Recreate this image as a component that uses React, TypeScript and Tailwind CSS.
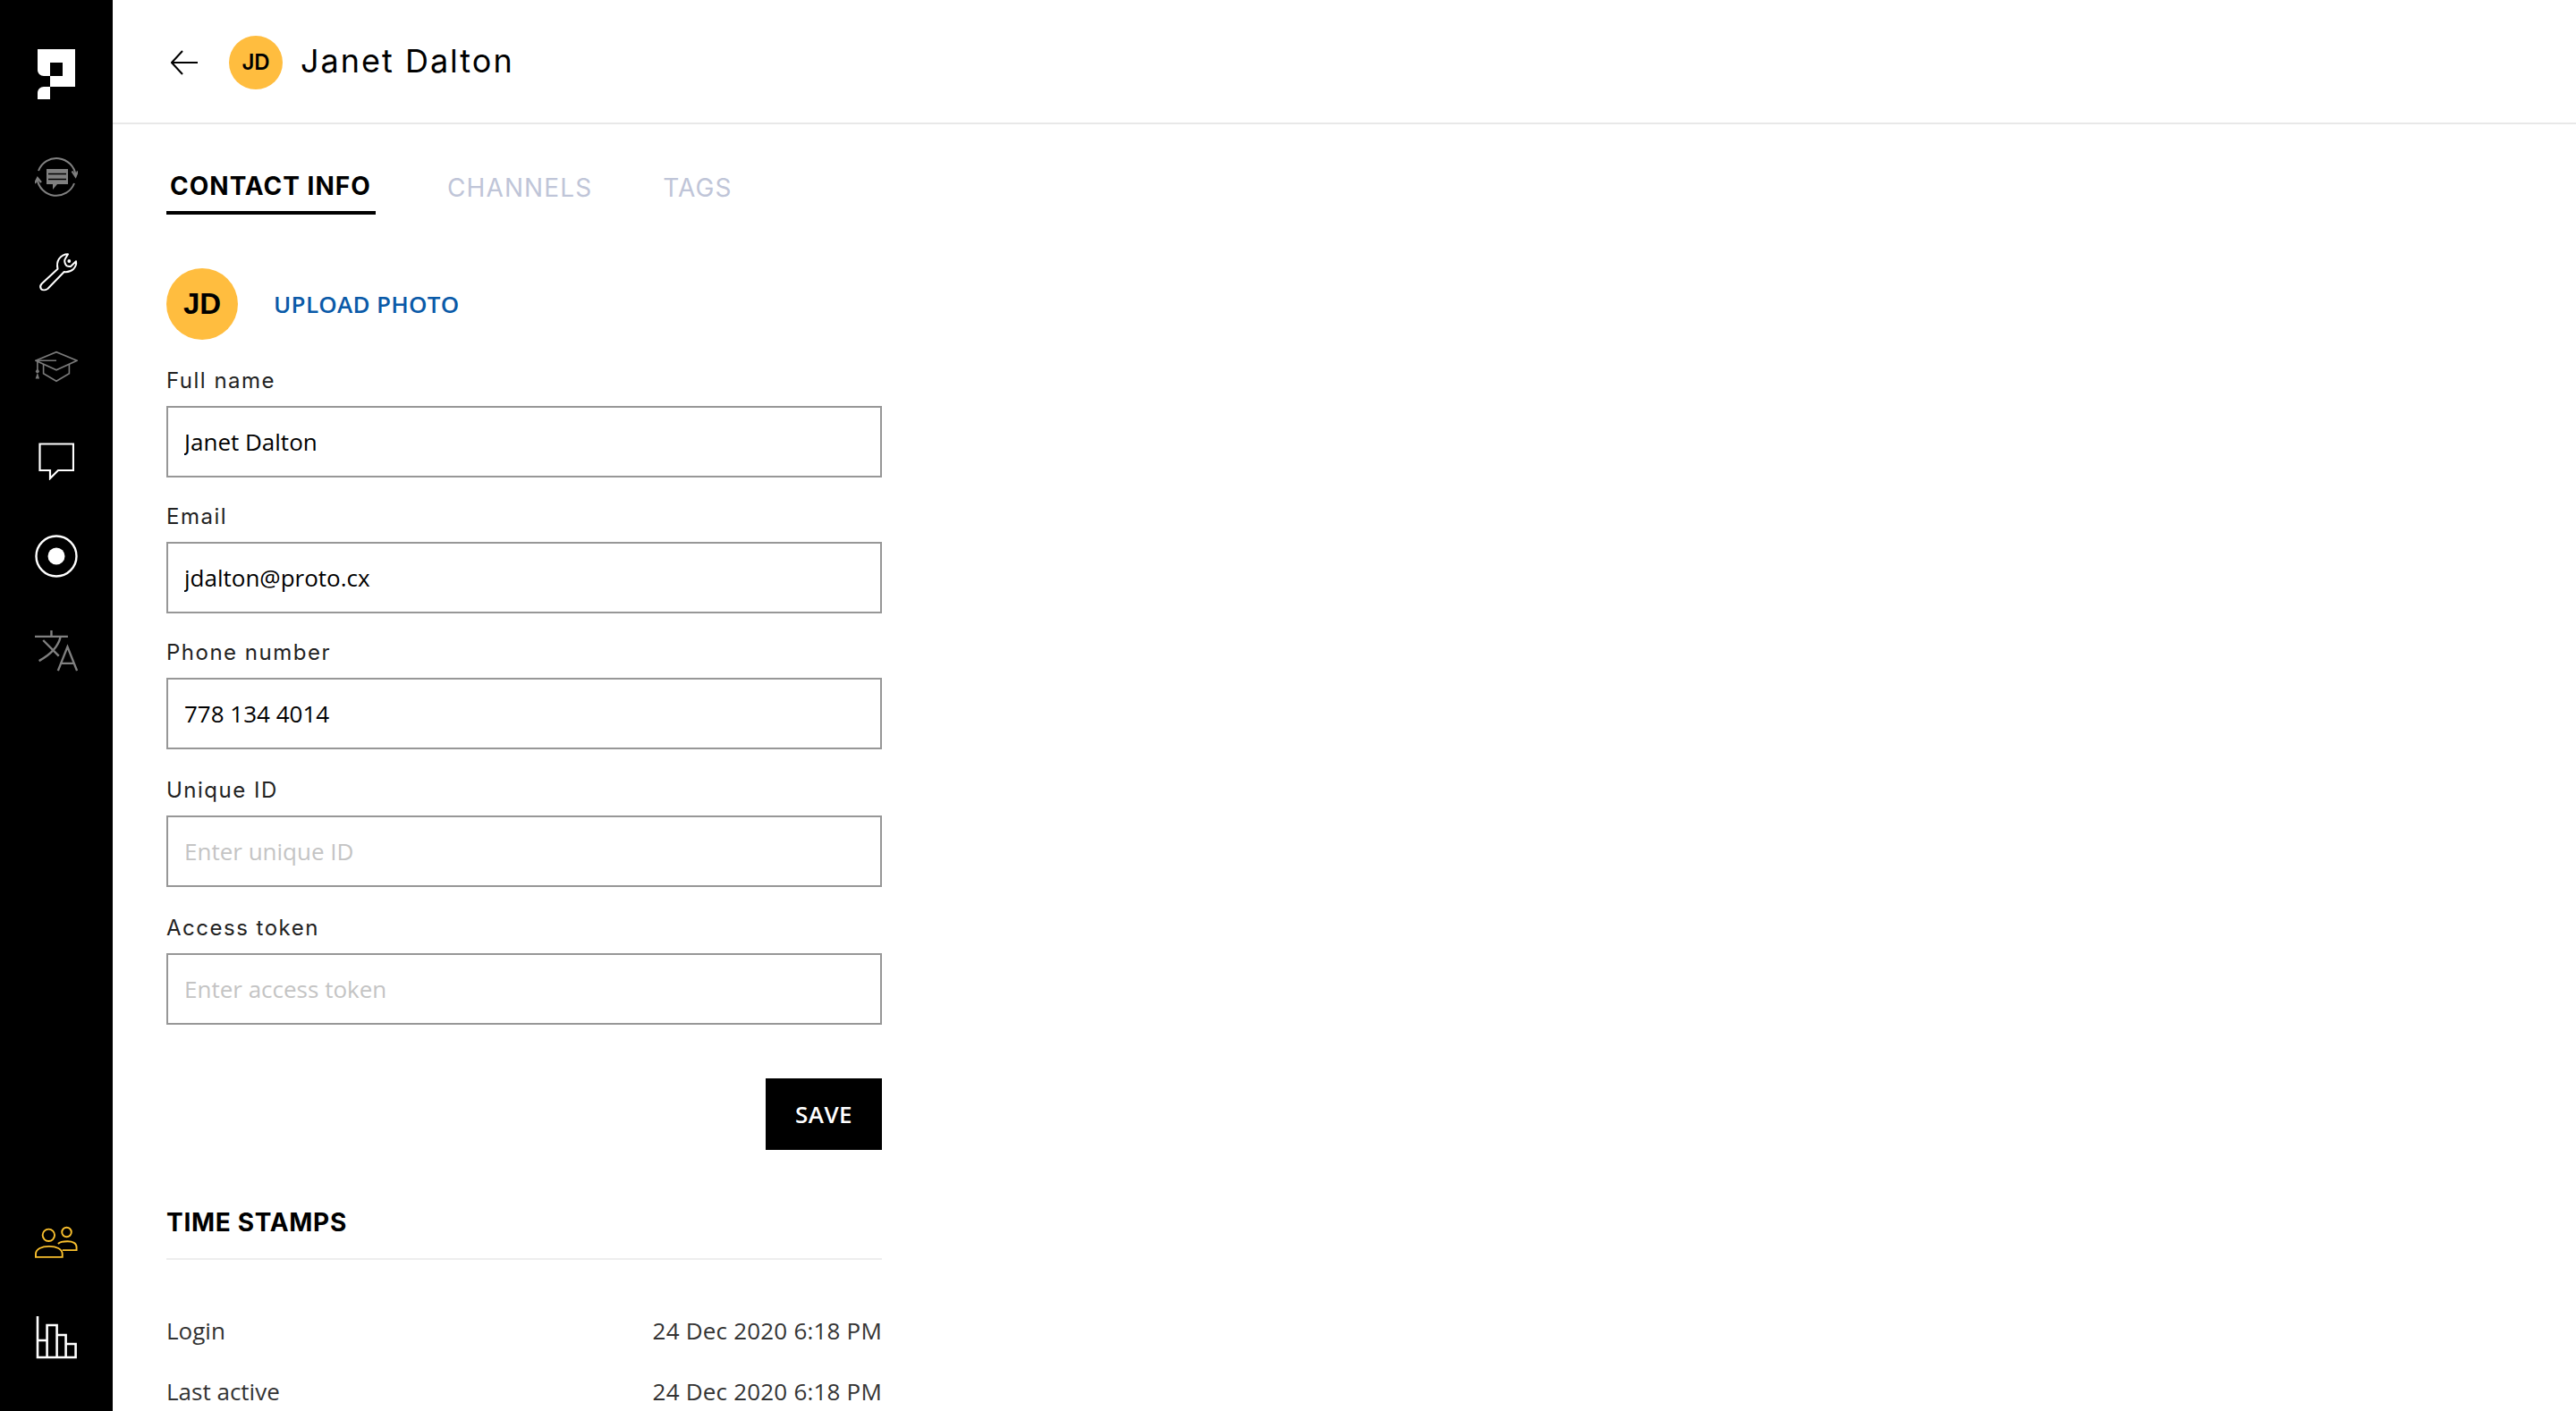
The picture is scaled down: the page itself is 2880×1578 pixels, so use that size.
import { useState } from 'react';

const sans = "font-['Inter','Liberation_Sans',sans-serif]";

function Logo() {
  return (
    <svg width="42" height="56" viewBox="0 0 42 56" fill="#fff">
      <path d="M0 0H42V42H28V30H14V0ZM14 15V30H28V15Z" fillRule="evenodd" />
      <path d="M0 0H14V30H7C3 30 0 27 0 23Z" />
      <path d="M14 30H28V42H14Z" />
      <path d="M0 56V49C0 45 3 42 7 42H14V56Z" />
    </svg>
  );
}

function SyncIcon() {
  return (
    <svg width="48" height="48" viewBox="0 0 48 48" fill="none" stroke="#808080" strokeWidth="2">
      <path d="M45.5 22A21.5 21.5 0 0 0 4 17" />
      <path d="M2.6 26A21.5 21.5 0 0 0 44 31" />
      <path d="M41.5 17.5 45.5 23.5 48 17.5" strokeWidth="2.2" />
      <path d="M0 31 3 25 7 30" strokeWidth="2.2" />
      <path d="M13 15H37V32H25L20 38V32H13Z" fill="#808080" stroke="none" />
      <path d="M15 20.5H35M15 26.5H35" stroke="#000" strokeWidth="1.3" />
    </svg>
  );
}

function WrenchIcon() {
  return (
    <svg width="48" height="48" viewBox="0 0 48 48" fill="none" stroke="#fff" strokeWidth="2" strokeLinejoin="round">
      <path d="M37 4.3C33 4.3 29.5 6 27 9.5 25 12.5 24.7 17 25.5 20.7L7.7 37.3C6 39 5.6 41 6.8 43 8.3 44.8 11.5 44.8 14.3 43L32.7 24C36 24.4 40 23.8 43 21 45.5 18.5 46.6 15.5 46 12.3L40 18C37.5 18.2 35 17.5 34.2 15.5 33 12.8 33 10.5 34 9.3Z" />
      <circle cx="38.3" cy="12" r="1.9" fill="#fff" stroke="none" />
    </svg>
  );
}

function CapIcon() {
  return (
    <svg width="50" height="36" viewBox="0 0 50 36" fill="none" stroke="#7a7a7a" strokeWidth="1.7">
      <path d="M1 11 25 1 49 11 25 22Z" />
      <path d="M10 15V26L25 35 40 26V15" />
      <path d="M25 11H3V24" />
      <circle cx="3" cy="23.5" r="2" fill="#7a7a7a" stroke="none" />
      <path d="M3 25 .7 32H5.3Z" fill="#7a7a7a" stroke="none" />
    </svg>
  );
}

function ChatIcon() {
  return (
    <svg width="40" height="42" viewBox="0 0 40 42" fill="none" stroke="#fff" strokeWidth="2.2">
      <path d="M1.5 1.5H39V31H22L13 40V31H1.5Z" />
    </svg>
  );
}

function RecordIcon() {
  return (
    <svg width="48" height="48" viewBox="0 0 48 48" fill="none">
      <circle cx="24" cy="24" r="22.5" stroke="#fff" strokeWidth="2.4" />
      <circle cx="24" cy="24" r="9.5" fill="#fff" />
    </svg>
  );
}

function TranslateIcon() {
  return (
    <svg width="52" height="50" viewBox="0 0 52 50" fill="none" stroke="#808080" strokeWidth="2.6">
      <path d="M0 7.5H40M20 0V7.5" />
      <path d="M31 8C28 21 18 30 5 37M10 12 29 31" />
      <path d="M28 49 39.5 20 51 49M31 40H48" />
    </svg>
  );
}

function UsersIcon() {
  return (
    <svg width="50" height="38" viewBox="0 0 50 38" fill="none" stroke="#f9bf2d" strokeWidth="2">
      <circle cx="16" cy="10" r="7" />
      <path d="M1 35.5H32V32C32 26 25 23 16.5 23S1 26 1 32Z" />
      <circle cx="37" cy="6.5" r="5.5" />
      <path d="M27 20C29 18 33 17.2 38 17.2 44 17.2 48.5 19.5 48.5 24V27.5H32" />
    </svg>
  );
}

function ChartIcon() {
  return (
    <svg width="46" height="48" viewBox="0 0 46 48" fill="none" stroke="#fff" strokeWidth="2.6">
      <path d="M2 0V46H44.6V31H33.6V46M2 27H12.6V46M12.6 27V10H23.6V46M23.6 21H33.6V31" />
    </svg>
  );
}

function Avatar({ large }: { large?: boolean }) {
  return (
    <div
      className={
        large
          ? "flex h-[80px] w-[80px] shrink-0 items-center justify-center rounded-full bg-[#ffbd3f] font-['Liberation_Sans',sans-serif] text-[33px] font-bold text-black"
          : `flex h-[60px] w-[60px] shrink-0 items-center justify-center rounded-full bg-[#ffbd3f] text-[24px] font-semibold text-black ${sans}`
      }
    >
      JD
    </div>
  );
}

function Field({ label, value, placeholder, className }: { label: string; value?: string; placeholder?: string; className?: string }) {
  const [text, setText] = useState(value ?? '');
  return (
    <label className={`block ${className ?? ''}`}>
      <span className={`block h-[28px] text-[24px] leading-[28px] tracking-[1.5px] text-[#222] ${sans}`}>{label}</span>
      <input
        value={text}
        placeholder={placeholder}
        onChange={(e) => setText(e.target.value)}
        className="mt-[14px] block h-[80px] w-full border-2 border-[#979797] bg-white px-[18px] font-['Open_Sans',sans-serif] text-[26px] text-black outline-none placeholder:text-[#c4c4c4]"
      />
    </label>
  );
}

const fields = [
  { label: 'Full name', value: 'Janet Dalton', className: 'mt-[32px]' },
  { label: 'Email', value: 'jdalton@proto.cx', className: 'mt-[30px]' },
  { label: 'Phone number', value: '778 134 4014', className: 'mt-[30px]' },
  { label: 'Unique ID', placeholder: 'Enter unique ID', className: 'mt-[32px]' },
  { label: 'Access token', placeholder: 'Enter access token', className: 'mt-[32px]' },
];

export default function App() {
  return (
    <div className="flex h-[1578px] w-[2880px] overflow-hidden bg-white">
      {/* 侧边栏 */}
      <aside className="flex w-[126px] shrink-0 flex-col items-center justify-between bg-black pt-[55px] pb-[58px]">
        <div className="flex flex-col items-center">
          <Logo />
          <nav className="mt-[63px] flex flex-col items-center gap-[58px]">
            <div className="flex h-[48px] w-[48px] items-center justify-center"><SyncIcon /></div>
            <div className="flex h-[48px] w-[48px] items-center justify-center"><WrenchIcon /></div>
            <div className="flex h-[48px] w-[48px] items-center justify-center"><CapIcon /></div>
            <div className="flex h-[48px] w-[48px] items-center justify-center"><ChatIcon /></div>
            <div className="flex h-[48px] w-[48px] items-center justify-center"><RecordIcon /></div>
            <div className="flex h-[48px] w-[48px] items-center justify-center"><TranslateIcon /></div>
          </nav>
        </div>
        <div className="flex flex-col items-center gap-[58px]">
          <div className="flex h-[48px] w-[48px] items-center justify-center"><UsersIcon /></div>
          <div className="flex h-[48px] w-[48px] items-center justify-center"><ChartIcon /></div>
        </div>
      </aside>

      <main className="min-w-0 flex-1">
        {/* 顶部 */}
        <header className="flex h-[139px] items-center border-b-2 border-[#e8e8e8] pt-[3px] pl-[65px]">
          <svg width="30" height="28" viewBox="0 0 30 28" fill="none" stroke="#000" strokeWidth="2">
            <path d="M30 14H1M13 1 1 14 13 27" />
          </svg>
          <div className="ml-[35px]"><Avatar /></div>
          <h1 className={`mb-[4px] ml-[20px] text-[36px] font-normal tracking-[2px] text-black ${sans}`}>Janet Dalton</h1>
        </header>

        {/* 标签 */}
        <div className={`mt-[51px] ml-[60px] flex text-[28px] leading-[36px] ${sans}`}>
          <div className="w-[234px] border-b-4 border-black px-[4px] pb-[10px] font-bold tracking-[1px] whitespace-nowrap text-black">CONTACT INFO</div>
          <div className="ml-[76px] px-[4px] pt-[2px] tracking-[1.1px] text-[#bfc5d8]">CHANNELS</div>
          <div className="ml-[71px] px-[4px] pt-[2px] tracking-[1.1px] text-[#bfc5d8]">TAGS</div>
        </div>

        <div className="mt-[60px] ml-[60px] w-[800px]">
          <div className="flex items-center gap-[40px]">
            <Avatar large />
            <button className="font-['Open_Sans',sans-serif] text-[26px] font-[550] tracking-[0.3px] text-[#0a5aa8]">UPLOAD PHOTO</button>
          </div>

          {fields.map((f) => (
            <Field key={f.label} {...f} />
          ))}

          <div className="mt-[60px] flex justify-end">
            <button className="h-[80px] w-[130px] bg-black font-['Open_Sans',sans-serif] text-[26px] font-[550] tracking-[0.4px] text-white">SAVE</button>
          </div>

          {/* 时间戳 */}
          <h2 className={`mt-[63px] text-[28px] leading-[36px] font-bold tracking-[0.7px] text-black ${sans}`}>TIME STAMPS</h2>
          <div className="mt-[22px] h-[2px] bg-[#eeeeee]" />
          <div className="mt-[61px] flex flex-col gap-[32px] font-['Open_Sans',sans-serif] text-[26px] leading-[36px] text-[#333]">
            <div className="flex justify-between"><span>Login</span><span className="tracking-[0.2px]">24 Dec 2020 6:18 PM</span></div>
            <div className="flex justify-between"><span>Last active</span><span className="tracking-[0.2px]">24 Dec 2020 6:18 PM</span></div>
          </div>
        </div>
      </main>
    </div>
  );
}
